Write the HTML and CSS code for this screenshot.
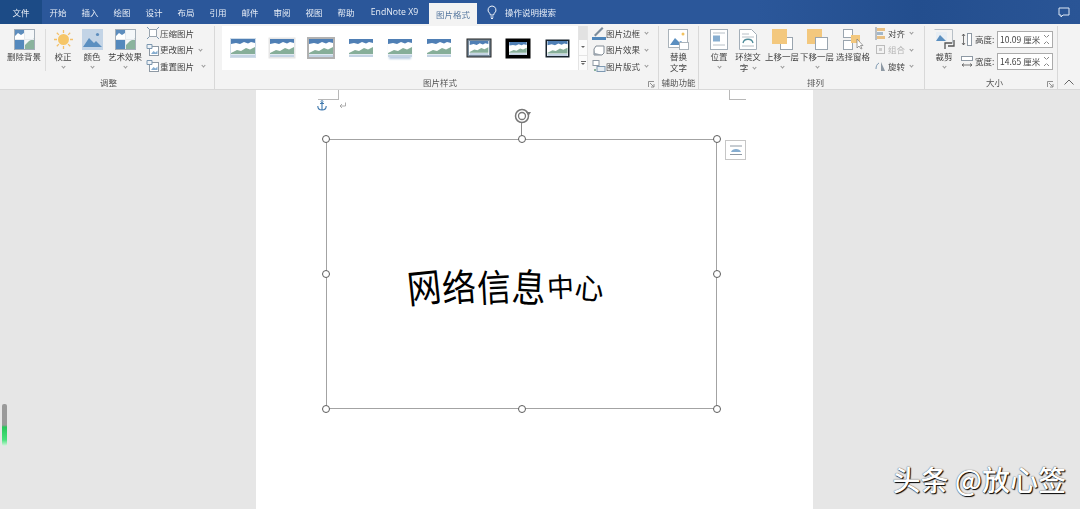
FILE: index.html
```html
<!DOCTYPE html>
<html lang="zh">
<head>
<meta charset="utf-8">
<title>图片格式</title>
<link rel="stylesheet" href="styles.css">
</head>
<body>
<svg class="defs" width="0" height="0">
  <symbol id="pic" viewBox="0 0 24 18">
    <rect width="24" height="18" fill="#fff"/>
    <path d="M0 0h24v4l-4-1-3 1.500-4-1.500-4 2-4-1-5 1z" fill="#4f7fb5"/>
    <path d="M0 14l6-3 4 1 5-3 4 1.500 5-2.500V15H0z" fill="#86ae99"/>
    <rect y="15.500" width="24" height="2.500" fill="#c3d3e3"/>
  </symbol>
  <symbol id="quad" viewBox="0 0 21 21">
    <rect width="21" height="21" fill="#f4f7f9"/>
    <path d="M0 0h10v10H0z" fill="#5d8dbd"/>
    <path d="M1 7l3-3 3 2 3-2v6H1z" fill="#fff"/>
    <path d="M11 16l4-4 6-3v11H11z" fill="#8ab39d"/>
    <path d="M0 11h10v10H0z" fill="#5489bd"/>
    <path d="M10.500 0v21M0 10.500h21" stroke="#e4e8ec"/>
    <rect x=".5" y=".5" width="20" height="20" fill="none" stroke="#a3aeb8"/>
  </symbol>
  <symbol id="small-pic" viewBox="0 0 14 14">
    <rect x="3.500" y="3.500" width="9" height="9" fill="#fff" stroke="#8e99a4"/>
    <path d="M5 11l2.500-3 2 1.500 2-2V11z" fill="#86add0"/>
    <path d="M1 1.500h5v4H1z" fill="#eef2f6" stroke="#7d98b1"/>
  </symbol>
</svg>

<header class="tabs">
  <span class="tab tab-file">文件</span>
  <span class="tab">开始</span>
  <span class="tab">插入</span>
  <span class="tab">绘图</span>
  <span class="tab">设计</span>
  <span class="tab">布局</span>
  <span class="tab">引用</span>
  <span class="tab">邮件</span>
  <span class="tab">审阅</span>
  <span class="tab">视图</span>
  <span class="tab">帮助</span>
  <span class="tab tab-endnote">EndNote X9</span>
  <span class="tab tab-active">图片格式</span>
  <span class="tab-search">
    <svg width="12" height="14" viewBox="0 0 12 14"><path d="M6 1a4 4 0 0 0-2.500 7.100c.6.500.8 1 .8 1.900h3.400c0-.9.2-1.400.8-1.900A4 4 0 0 0 6 1zM4.500 12h3M5 13.500h2" fill="none" stroke="#eef3fa" stroke-width="1"/></svg>
    操作说明搜索
  </span>
  <svg class="comment" width="12" height="11" viewBox="0 0 12 11"><path d="M1 1h10v7H5L3 10V8H1z" fill="none" stroke="#dfe8f4"/></svg>
</header>

<section class="ribbon">
  <div class="group g-adjust">
    <div class="group-body">
      <div class="big w42">
        <svg class="big-icon" width="21" height="21"><use href="#quad"/></svg>
        <span>删除背景</span>
      </div>
      <i class="vsep"></i>
      <div class="big w30">
        <svg class="big-icon" width="21" height="21" viewBox="0 0 21 21"><circle cx="10.500" cy="10.500" r="5.500" fill="#f6c667"/><path d="M10.500 1v3M10.500 17v3M1 10.500h3M17 10.500h3M3.800 3.800l2.100 2.100M15.100 15.100l2.100 2.100M3.800 17.200l2.100-2.100M15.100 5.900l2.100-2.100" stroke="#f3c06a" stroke-width="1.300"/></svg>
        <span>校正</span><b class="chev"></b>
      </div>
      <div class="big w28">
        <svg class="big-icon" width="21" height="21" viewBox="0 0 21 21"><rect width="21" height="21" fill="#c3d4e6"/><circle cx="15.500" cy="5.500" r="1.600" fill="#5d8dbd"/><path d="M1 18l6-9 5 5 2-2 6 6z" fill="#5b8fc0"/></svg>
        <span>颜色</span><b class="chev"></b>
      </div>
      <div class="big w38">
        <svg class="big-icon" width="21" height="21"><use href="#quad"/></svg>
        <span>艺术效果</span><b class="chev"></b>
      </div>
      <div class="small-col col-adjust">
        <div class="small"><svg width="14" height="14" viewBox="0 0 14 14"><path d="M1 1l3 3M13 1l-3 3M1 13l3-3M13 13l-3-3" stroke="#7d98b1"/><rect x="3.500" y="3.500" width="7" height="7" fill="#fff" stroke="#9aa5af"/></svg><span>压缩图片</span></div>
        <div class="small"><svg width="14" height="14"><use href="#small-pic"/></svg><span>更改图片</span><b class="mini"></b></div>
        <div class="small"><svg width="14" height="14"><use href="#small-pic"/></svg><span>重置图片</span><b class="mini gap6"></b></div>
      </div>
    </div>
    <div class="group-label">调整</div>
  </div>

  <div class="group g-styles">
    <div class="group-body">
      <div class="gallery">
        <div class="thumb"><svg class="t-soft" width="24" height="18"><use href="#pic"/></svg></div>
        <div class="thumb"><svg class="t-white" width="24" height="18"><use href="#pic"/></svg></div>
        <div class="thumb"><svg class="t-gray" width="24" height="18"><use href="#pic"/></svg></div>
        <div class="thumb"><svg class="t-none" width="24" height="18"><use href="#pic"/></svg></div>
        <div class="thumb"><svg class="t-reflect" width="24" height="18"><use href="#pic"/></svg></div>
        <div class="thumb"><svg class="t-none" width="24" height="18"><use href="#pic"/></svg></div>
        <div class="thumb"><svg class="t-dark" width="20" height="14"><use href="#pic"/></svg></div>
        <div class="thumb"><svg class="t-black" width="18" height="13"><use href="#pic"/></svg></div>
        <div class="thumb"><svg class="t-darkthin" width="21" height="15"><use href="#pic"/></svg></div>
      </div>
      <div class="scroller">
        <span class="scroll-off"></span>
        <span class="scroll-cell"><i class="tri"></i></span>
        <span class="scroll-cell scroll-more"><i class="bar"></i><i class="tri"></i></span>
      </div>
      <div class="small-col col-styles">
        <div class="small"><svg width="14" height="14" viewBox="0 0 14 14"><path d="M2 9l8-8 1.500 1.500-8 8z" fill="#7c8c9b"/><rect y="11" width="14" height="3" fill="#4f86bb"/></svg><span>图片边框</span><b class="mini"></b></div>
        <div class="small"><svg width="14" height="14" viewBox="0 0 14 14"><path d="M4 3h8v7l-2 2H2V6z" fill="#fff" stroke="#808a94"/><path d="M2 6v6h8l-3-1-4-1z" fill="#9aa4ae"/></svg><span>图片效果</span><b class="mini"></b></div>
        <div class="small"><svg width="14" height="14" viewBox="0 0 14 14"><rect x="1" y="1.500" width="6" height="5" fill="#fff" stroke="#8e99a4"/><rect x="5" y="7.500" width="8" height="5" fill="#e6edf3" stroke="#7d98b1"/><path d="M2 10h2v2H2z" fill="#8ab39d"/></svg><span>图片版式</span><b class="mini"></b></div>
      </div>
    </div>
    <div class="group-label">图片样式<svg class="launcher" width="7" height="7" viewBox="0 0 7 7"><path d="M.5 6V.5H6M2 2l3.500 3.500M3 6h3V3" fill="none" stroke="#777" stroke-width=".8"/></svg></div>
  </div>

  <div class="group g-access">
    <div class="group-body">
      <div class="big w39">
        <svg class="big-icon" width="21" height="21" viewBox="0 0 21 21"><rect x=".5" y=".5" width="19" height="18" fill="#fff" stroke="#aab3ba"/><circle cx="15" cy="5" r="1.500" fill="#f2c25f"/><path d="M2 16l5-7 4 4 2-1 4 4z" fill="#5b8fc0"/><rect x="11.500" y="13.500" width="9" height="7" fill="#fff" stroke="#aab3ba"/></svg>
        <span>替换</span><span>文字</span>
      </div>
    </div>
    <div class="group-label">辅助功能</div>
  </div>

  <div class="group g-arrange">
    <div class="group-body">
      <div class="big w24">
        <svg class="big-icon" width="18" height="21" viewBox="0 0 18 21"><rect x=".5" y=".5" width="17" height="20" fill="#fff" stroke="#a3aeb8"/><path d="M3 4h12M3 16h12" stroke="#b8c0c7"/><rect x="3" y="6.500" width="7" height="6" fill="#86add0"/></svg>
        <span>位置</span><b class="chev"></b>
      </div>
      <div class="big w34">
        <svg class="big-icon" width="18" height="21" viewBox="0 0 18 21"><path d="M.5.500h12l5 5v15H.5z" fill="#fff" stroke="#a3aeb8"/><path d="M3 5h7M3 8h12M3 17h12" stroke="#b8c0c7"/><path d="M4 14c1-5 9-5 10 0" fill="none" stroke="#4d8b99" stroke-width="1.300"/></svg>
        <span>环绕文</span><span class="with-chev">字<b class="mini"></b></span>
      </div>
      <div class="big w34">
        <svg class="big-icon" width="21" height="21" viewBox="0 0 21 21"><rect x="8.500" y="8.500" width="12" height="12" fill="#fff" stroke="#9aa5af"/><rect width="15" height="15" fill="#f3c87e"/></svg>
        <span>上移一层</span><b class="chev"></b>
      </div>
      <div class="big w36">
        <svg class="big-icon" width="21" height="21" viewBox="0 0 21 21"><rect width="15" height="15" fill="#f3c87e"/><rect x="8.500" y="8.500" width="12" height="12" fill="#fff" stroke="#9aa5af"/></svg>
        <span>下移一层</span><b class="chev"></b>
      </div>
      <div class="big w36">
        <svg class="big-icon" width="21" height="21" viewBox="0 0 21 21"><rect x=".5" y=".5" width="9" height="8" fill="#fff" stroke="#9aa5af"/><rect x=".5" y="11.500" width="9" height="9" fill="#fff" stroke="#9aa5af"/><rect x="8" y="6" width="9" height="8" fill="#f3c87e"/><path d="M14 10v9l2-2 2 3 1-.5-1.500-3h2.500z" fill="#fff" stroke="#777" stroke-width=".7"/></svg>
        <span>选择窗格</span>
      </div>
      <div class="small-col col-arrange">
        <div class="small"><svg width="11" height="13" viewBox="0 0 11 13"><path d="M1 0v13" stroke="#808a94"/><rect x="2" y="1" width="8" height="3" fill="#e8c084"/><rect x="2" y="5" width="6" height="3" fill="#a3b7c9"/><rect x="2" y="9" width="8" height="3" fill="#e8c084"/></svg><span>对齐</span><b class="mini"></b></div>
        <div class="small off"><svg width="11" height="13" viewBox="0 0 11 13"><rect x="1.500" y="2.500" width="8" height="8" fill="none" stroke="#bbb"/><rect x="4" y="5" width="3" height="3" fill="#ccc"/></svg><span>组合</span><b class="mini"></b></div>
        <div class="small"><svg width="11" height="13" viewBox="0 0 11 13"><path d="M6 2l4 9H6z" fill="#8e99a4"/><path d="M1 9c0-3 1-5 3-6" fill="none" stroke="#7d98b1"/></svg><span>旋转</span><b class="mini"></b></div>
      </div>
    </div>
    <div class="group-label">排列</div>
  </div>

  <div class="group g-size">
    <div class="group-body">
      <div class="big w24">
        <svg class="big-icon" width="21" height="21" viewBox="0 0 21 21"><path d="M.5.500h18v14" fill="none" stroke="#b8c0c7"/><rect x="2" y="3" width="11" height="9" fill="#e8eef4"/><path d="M2 12l4-6 3 3 3 3z" fill="#5b8fc0"/><path d="M11 20v-6h7M14 17h6v-6" fill="none" stroke="#555" stroke-width="1.300"/></svg>
        <span>裁剪</span><b class="chev"></b>
      </div>
      <div class="size-col">
        <div class="size-row">
          <svg width="12" height="13" viewBox="0 0 12 13"><path d="M2.500 1v11M1 3l1.500-2L4 3M1 10l1.500 2L4 10" fill="none" stroke="#555" stroke-width=".8"/><rect x="6.500" y=".5" width="4" height="12" fill="#fff" stroke="#8e99a4"/></svg>
          <span class="size-label">高度:</span>
          <div class="spin"><span>10.09 厘米</span><i class="spin-arrows"></i></div>
        </div>
        <div class="size-row">
          <svg width="12" height="12" viewBox="0 0 12 12"><rect x=".5" y=".5" width="11" height="4" fill="#fff" stroke="#8e99a4"/><path d="M1 9h10M3 7.500L1 9l2 1.500M9 7.500L11 9l-2 1.500" fill="none" stroke="#555" stroke-width=".8"/></svg>
          <span class="size-label">宽度:</span>
          <div class="spin"><span>14.65 厘米</span><i class="spin-arrows"></i></div>
        </div>
      </div>
    </div>
    <div class="group-label">大小<svg class="launcher" width="7" height="7" viewBox="0 0 7 7"><path d="M.5 6V.5H6M2 2l3.500 3.500M3 6h3V3" fill="none" stroke="#777" stroke-width=".8"/></svg></div>
  </div>
  <div class="collapse"><svg width="10" height="6" viewBox="0 0 10 6"><path d="M.5 5.500L5 1l4.500 4.500" fill="none" stroke="#666"/></svg></div>
</section>

<main class="workspace">
  <article class="page">
    <i class="crop crop-left"></i>
    <i class="crop crop-right"></i>
    <svg class="anchor" width="10" height="11" viewBox="0 0 10 11"><path d="M5 2v8M3 3.500h4M.8 6c0 2.500 2 4 4.200 4s4.200-1.500 4.200-4" fill="none" stroke="#3f78ad" stroke-width="1.100"/><circle cx="5" cy="1.500" r="1" fill="none" stroke="#3f78ad" stroke-width=".8"/></svg>
    <svg class="return" width="7" height="7" viewBox="0 0 7 7"><path d="M6.500.5v3.500H1M3 2L1 4l2 2" fill="none" stroke="#999" stroke-width=".8"/></svg>
    <div class="frame">
      <svg class="rotate" width="18" height="18" viewBox="0 0 18 18"><circle cx="8" cy="9" r="6.500" fill="none" stroke="#777" stroke-width="1.500"/><circle cx="8" cy="9" r="3.500" fill="none" stroke="#777" stroke-width="1.300"/><path d="M12 5h5l-2.500 4z" fill="#777"/></svg>
      <i class="rotate-line"></i>
      <i class="handle h-tl"></i><i class="handle h-tc"></i><i class="handle h-tr"></i>
      <i class="handle h-ml"></i><i class="handle h-mr"></i>
      <i class="handle h-bl"></i><i class="handle h-bc"></i><i class="handle h-br"></i>
      <div class="layout-btn"><svg width="12" height="11" viewBox="0 0 12 11"><path d="M0 1h12M0 9.500h12" stroke="#8e99a4"/><path d="M1 7c1-4 9-4 10 0z" fill="#86add0"/></svg></div>
      <p class="signature"><span class="s1">网</span><span class="s2">络</span><span class="s3">信</span><span class="s4">息</span><span class="s5">中</span><span class="s6">心</span></p>
    </div>
  </article>
  <div class="meter"></div>
  <div class="watermark">头条 @放心签</div>
</main>
</body>
</html>
```
FILE: styles.css
```css
* { box-sizing: border-box; }
html, body { margin: 0; height: 100%; }
body {
  width: 1080px;
  height: 509px;
  overflow: hidden;
  display: flex;
  flex-direction: column;
  font-family: "Noto Sans CJK SC", "Liberation Sans", sans-serif;
  color: #444;
  background: #e6e6e6;
}
.defs { position: absolute; }

/* tab bar */
.tabs {
  height: 24px;
  flex: none;
  display: flex;
  align-items: flex-end;
  color: #e8eef7;
  font-size: 8.5px;
  filter: blur(.3px);
  background: linear-gradient(90deg, #2b579a 0, #2b579a 70%, #234e8e 85%, #2a5596 100%);
}
.tab {
  width: 32px;
  height: 24px;
  display: flex;
  align-items: center;
  justify-content: center;
}
.tab-file { width: 42px; background: #1c4b86; }
.tab-endnote {
  width: 65px;
  margin-right: 2px;
  font-family: "Open Sans", "Liberation Sans", sans-serif;
  font-size: 8.7px;
}
.tab-active {
  width: 48px;
  height: 21px;
  color: #56779f;
  background: #f3f3f3;
}
.tab-search {
  height: 24px;
  margin-left: 9px;
  display: flex;
  align-items: center;
  gap: 7px;
}
.comment { margin-left: auto; margin-right: 10px; align-self: center; }

/* ribbon */
.ribbon {
  height: 66px;
  flex: none;
  display: flex;
  background: #f3f3f3;
  border-bottom: 1px solid #d8d8d8;
  font-size: 8.5px;
  line-height: 11px;
}
.group {
  position: relative;
  height: 63px;
  margin-top: 2px;
  display: flex;
  flex-direction: column;
  border-right: 1px solid #d8d8d8;
  filter: blur(.3px);
}
.g-adjust { width: 215px; padding-left: 3px; }
.g-styles { width: 444px; padding-left: 7px; }
.g-access { width: 40px; }
.g-arrange { width: 226px; padding-left: 8px; }
.g-size { width: 133px; padding-left: 7px; }
.group-body { flex: 1; display: flex; min-height: 0; }
.group-label {
  height: 12px;
  flex: none;
  text-align: center;
  color: #555;
  line-height: 11px;
}
.launcher { position: absolute; right: 3px; bottom: 1px; }

/* large buttons */
.big {
  flex: none;
  padding-top: 3px;
  display: flex;
  flex-direction: column;
  align-items: center;
  white-space: nowrap;
}
.big-icon { margin-bottom: 1px; flex: none; }
.w24 { width: 24px; }
.w28 { width: 28px; }
.w30 { width: 30px; }
.w34 { width: 34px; }
.w36 { width: 36px; }
.w38 { width: 38px; }
.w39 { width: 39px; }
.w42 { width: 42px; }
.chev, .mini {
  flex: none;
  width: 3px;
  height: 3px;
  border: solid #999;
  border-width: 0 .7px .7px 0;
  transform: rotate(45deg);
}
.chev { margin-top: 3px; }
.mini { margin: -1px 0 0 5px; }
.gap6 { margin-left: 8px; }
.with-chev { display: flex; align-items: center; }
.vsep {
  width: 1px;
  height: 42px;
  margin-top: 3px;
  background: #dcdcdc;
  flex: none;
}
.w42 + .vsep + .w30 { margin-left: 2px; }

/* small button columns */
.small-col { flex: none; display: flex; flex-direction: column; margin-top: -1px; }
.small {
  height: 16.500px;
  display: flex;
  align-items: center;
  white-space: nowrap;
}
.small svg { flex: none; }
.off { color: #b5b5b5; }
.col-adjust { margin-left: 2px; }
.col-styles { margin-left: 4px; }
.col-arrange { margin-left: 4px; }
.col-arrange .small svg { margin-right: 2px; }

/* style gallery */
.gallery {
  width: 356px;
  height: 44px;
  padding: 0 1px;
  display: grid;
  grid-template-columns: repeat(9, 1fr);
  align-items: center;
  justify-items: center;
  background: #fff;
}
.thumb { display: flex; height: 24px; align-items: center; }
.t-soft { box-shadow: 0 0 0 1px #cfdce8; }
.t-white { box-shadow: 0 0 0 1.500px #e6e6e6; }
.t-gray { box-shadow: 0 0 0 2px #b1b1b1; }
.t-reflect { box-shadow: 0 3px 2px -1px #b7cbe0; }
.t-dark { box-shadow: 0 0 0 1.500px #778a9b, 0 0 0 2.500px #222; }
.t-black { box-shadow: 0 0 0 3.500px #000; }
.t-darkthin { box-shadow: 0 0 0 1.500px #17222c; }
.scroller {
  width: 10px;
  height: 44px;
  display: flex;
  flex-direction: column;
  background: #fbfbfb;
  border: 1px solid #e4e4e4;
  border-width: 0 1px;
}
.scroller span { flex: 1; }
.scroll-off { background: #e2e2e2; }
.scroll-cell {
  display: flex;
  flex-direction: column;
  align-items: center;
  justify-content: center;
  gap: 1px;
}
.scroll-more { border-top: 1px solid #e4e4e4; }
.tri {
  width: 0;
  height: 0;
  border: 2.500px solid transparent;
  border-top-color: #666;
  border-bottom-width: 0;
}
.bar { width: 5px; height: 1px; background: #666; }

/* size */
.size-col { margin-left: 5px; padding-top: 5px; display: flex; flex-direction: column; gap: 5px; }
.size-row { display: flex; align-items: center; height: 17px; }
.size-label { width: 24px; padding-left: 2px; white-space: nowrap; }
.spin {
  width: 56px;
  height: 17px;
  padding: 0 3px 0 2px;
  display: flex;
  align-items: center;
  justify-content: space-between;
  background: #fff;
  border: 1px solid #ababab;
  white-space: nowrap;
}
.spin-arrows {
  width: 5px;
  height: 11px;
  background:
    linear-gradient(45deg, transparent 46%, #888 46% 60%, transparent 60%) 0 0 / 50% 4px no-repeat,
    linear-gradient(-45deg, transparent 46%, #888 46% 60%, transparent 60%) 100% 0 / 50% 4px no-repeat,
    linear-gradient(135deg, transparent 46%, #888 46% 60%, transparent 60%) 0 100% / 50% 4px no-repeat,
    linear-gradient(-135deg, transparent 46%, #888 46% 60%, transparent 60%) 100% 100% / 50% 4px no-repeat;
}
.collapse { flex: 1; display: flex; align-items: flex-end; justify-content: center; padding-bottom: 4px; }

/* document area */
.workspace {
  position: relative;
  flex: 1;
  min-height: 0;
  padding-left: 256px;
  overflow: hidden;
}
.page {
  position: relative;
  width: 557px;
  height: 100%;
  padding: 49px 0 0 70px;
  background: #fff;
}
.crop { position: absolute; top: 0; height: 10px; border: 0 solid #b8b8b8; }
.crop-left { left: 62px; width: 21px; border-width: 0 1px 1px 0; }
.crop-right { left: 473px; width: 17px; border-width: 0 0 1px 1px; }
.anchor { position: absolute; left: 61px; top: 10px; }
.return { position: absolute; left: 83px; top: 12px; }

.frame {
  position: relative;
  width: 391px;
  height: 270px;
  display: flex;
  align-items: center;
  justify-content: center;
  border: 1px solid #a3a3a3;
}
.handle {
  position: absolute;
  width: 8px;
  height: 8px;
  background: #fff;
  border: 1.500px solid #5c5c5c;
  border-radius: 50%;
}
.h-tl, .h-tc, .h-tr { top: -5px; }
.h-ml, .h-mr { top: 130px; }
.h-bl, .h-bc, .h-br { bottom: -5px; }
.h-tl, .h-ml, .h-bl { left: -5px; }
.h-tc, .h-bc { left: 190.500px; }
.h-tr, .h-mr, .h-br { right: -5px; }
.rotate { position: absolute; left: 187px; top: -33px; }
.rotate-line { position: absolute; left: 194px; top: -17px; width: 1px; height: 13px; background: #8a8a8a; }
.layout-btn {
  position: absolute;
  left: 398px;
  top: 0;
  width: 21px;
  height: 20px;
  display: flex;
  align-items: center;
  justify-content: center;
  background: #fff;
  border: 1px solid #c6c6c6;
}
.signature {
  margin: 24px 32px 0 0;
  display: flex;
  align-items: center;
  gap: 1px;
  color: #000;
  font-size: 34px;
  line-height: 44px;
  font-weight: 400;
  font-family: "Noto Sans CJK SC", sans-serif;
}
.signature span { display: block; }
.s1 { transform: rotate(-6deg) scaleY(1.150); }
.s2 { transform: rotate(-4deg) scaleY(1.100); }
.s3 { transform: rotate(-3deg) scaleY(1.100); }
.s4 { transform: rotate(3deg) scaleY(1.150); }
.s5 { font-size: 27px; transform: rotate(-3deg); }
.s6 { font-size: 29px; transform: rotate(5deg); }

/* overlays on the window */
.meter {
  position: absolute;
  left: 2px;
  top: 314px;
  width: 5px;
  height: 42px;
  border-radius: 2px;
  filter: blur(.7px);
  background: linear-gradient(180deg, #9a9a9a 0, #9a9a9a 50%, #28c65a 55%, #48e27c 85%, #d8f5e0 100%);
}
.watermark {
  position: absolute;
  right: 14px;
  bottom: 12px;
  color: #fff;
  font-size: 28px;
  font-weight: 500;
  line-height: 36px;
  white-space: nowrap;
  text-shadow: 1px 1px 1px #000, 0 0 1px #222;
}
```
